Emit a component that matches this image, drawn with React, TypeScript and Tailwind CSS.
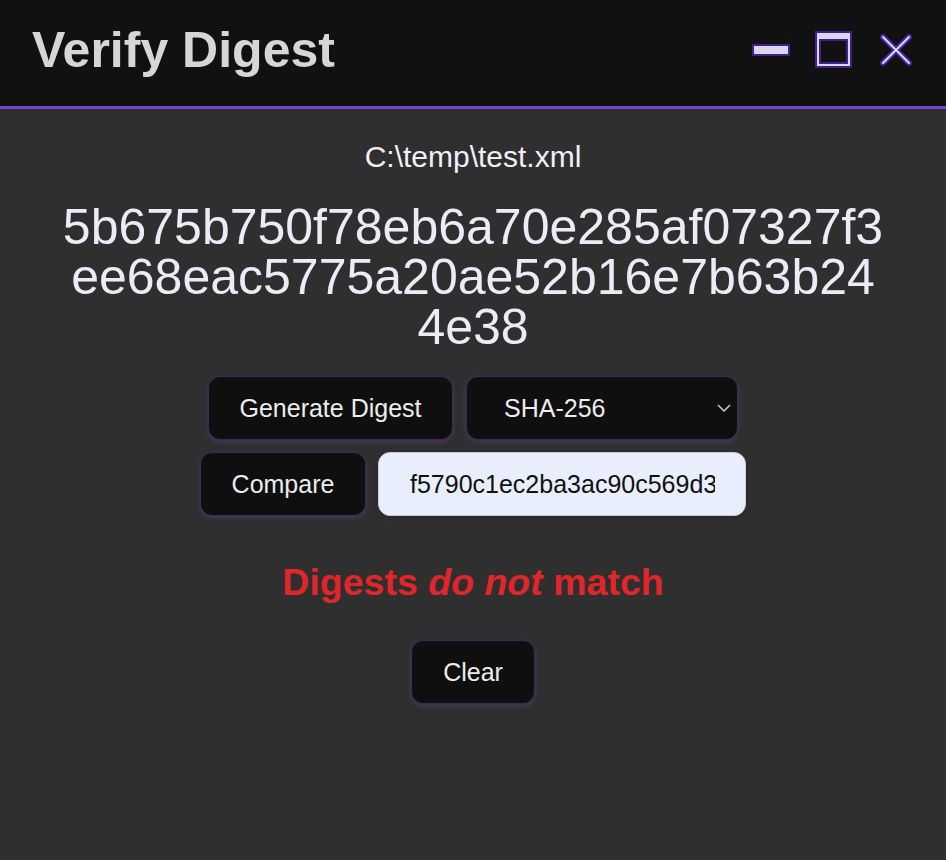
import { useState } from "react";

const HASH =
  "5b675b750f78eb6a70e285af07327f3ee68eac5775a20ae52b16e7b63b244e38";

function WindowControls() {
  return (
    <div className="flex items-center gap-[25px]">
      {/* minimize */}
      <svg width="38" height="12" viewBox="0 0 38 12">
        <rect x="1" y="1" width="36" height="10" fill="#dcd6ec" stroke="#40208f" strokeWidth="2" />
      </svg>
      {/* maximize */}
      <svg width="37" height="37" viewBox="0 0 37 37">
        <rect x="0" y="0" width="37" height="37" fill="#40208f" />
        <rect x="2" y="2" width="33" height="33" fill="#dcd6ec" />
        <rect x="4" y="8" width="29" height="25" fill="#40208f" />
        <rect x="6" y="10" width="25" height="21" fill="#111111" />
      </svg>
      {/* close */}
      <svg width="34" height="34" viewBox="0 0 34 34" className="ml-[2px]">
        <g strokeLinecap="round">
          <path d="M4 4 L30 30 M30 4 L4 30" stroke="#4a25a8" strokeWidth="6" />
          <path d="M4 4 L30 30 M30 4 L4 30" stroke="#dcd6ec" strokeWidth="2" />
        </g>
      </svg>
    </div>
  );
}

const buttonClass =
  "h-[64px] rounded-xl bg-[#0f0f0f] border border-[#3a2c5a] shadow-[0_2px_5px_rgba(110,80,180,0.35)] text-[25px] text-[#ececec] leading-none";

export default function App() {
  const [algo, setAlgo] = useState("SHA-256");
  const [compare, setCompare] = useState(
    "f5790c1ec2ba3ac90c569d3a0f1b7c2e9d84e6a1b3f5c7d9e0a2b4c6d8e0f1a2"
  );

  return (
    <div className="min-h-screen bg-[#2f2f2f] font-['Liberation_Sans',Arial,sans-serif]">
      {/* Title bar */}
      <header className="h-[109px] bg-[#111111] border-b-[3px] border-[#7347d1] flex items-center justify-between pl-[32px] pr-[33px] pb-[7px]">
        <h1 className="text-[50px] leading-[50px] font-bold text-[#d6d6d6]">
          Verify Digest
        </h1>
        <WindowControls />
      </header>

      <main className="flex flex-col items-center">
        <p className="mt-[30px] text-[30px] leading-[36px] text-[#f1eff8]">
          C:\temp\test.xml
        </p>

        <p className="mt-[27px] w-[825px] text-center break-all text-[50px] leading-[50px] text-[#eeeaf8]">
          {HASH}
        </p>

        {/* Controls */}
        <div className="mt-[24px] flex flex-col items-center gap-[12px]">
          <div className="flex gap-[13px]">
            <button className={`${buttonClass} w-[245px]`}>Generate Digest</button>
            <div className="relative">
              <select
                value={algo}
                onChange={(e) => setAlgo(e.target.value)}
                className={`${buttonClass} w-[272px] appearance-none pl-[37px] outline-none`}
              >
                <option>SHA-256</option>
                <option>SHA-384</option>
                <option>SHA-512</option>
              </select>
              <svg
                width="14"
                height="9"
                viewBox="0 0 14 9"
                className="absolute right-[7px] top-[28px] pointer-events-none"
              >
                <path d="M1 1 L7 7 L13 1" fill="none" stroke="#d0d0d0" strokeWidth="1.5" />
              </svg>
            </div>
          </div>
          <div className="flex gap-[12px]">
            <button className={`${buttonClass} w-[166px]`}>Compare</button>
            <input
              value={compare}
              onChange={(e) => setCompare(e.target.value)}
              className="h-[64px] w-[368px] rounded-xl bg-[#e9eefc] border border-[#cfc8e6] shadow-[0_2px_4px_rgba(0,0,0,0.2)] pl-[31px] pr-[30px] text-[25px] text-[#111111] outline-none"
            />
          </div>
        </div>

        <p className="mt-[44px] text-[37.5px] leading-[44px] font-bold text-[#e0262a]">
          Digests <em>do not</em> match
        </p>

        <button className={`${buttonClass} mt-[36px] w-[124px] h-[62px]`}>Clear</button>
      </main>
    </div>
  );
}
